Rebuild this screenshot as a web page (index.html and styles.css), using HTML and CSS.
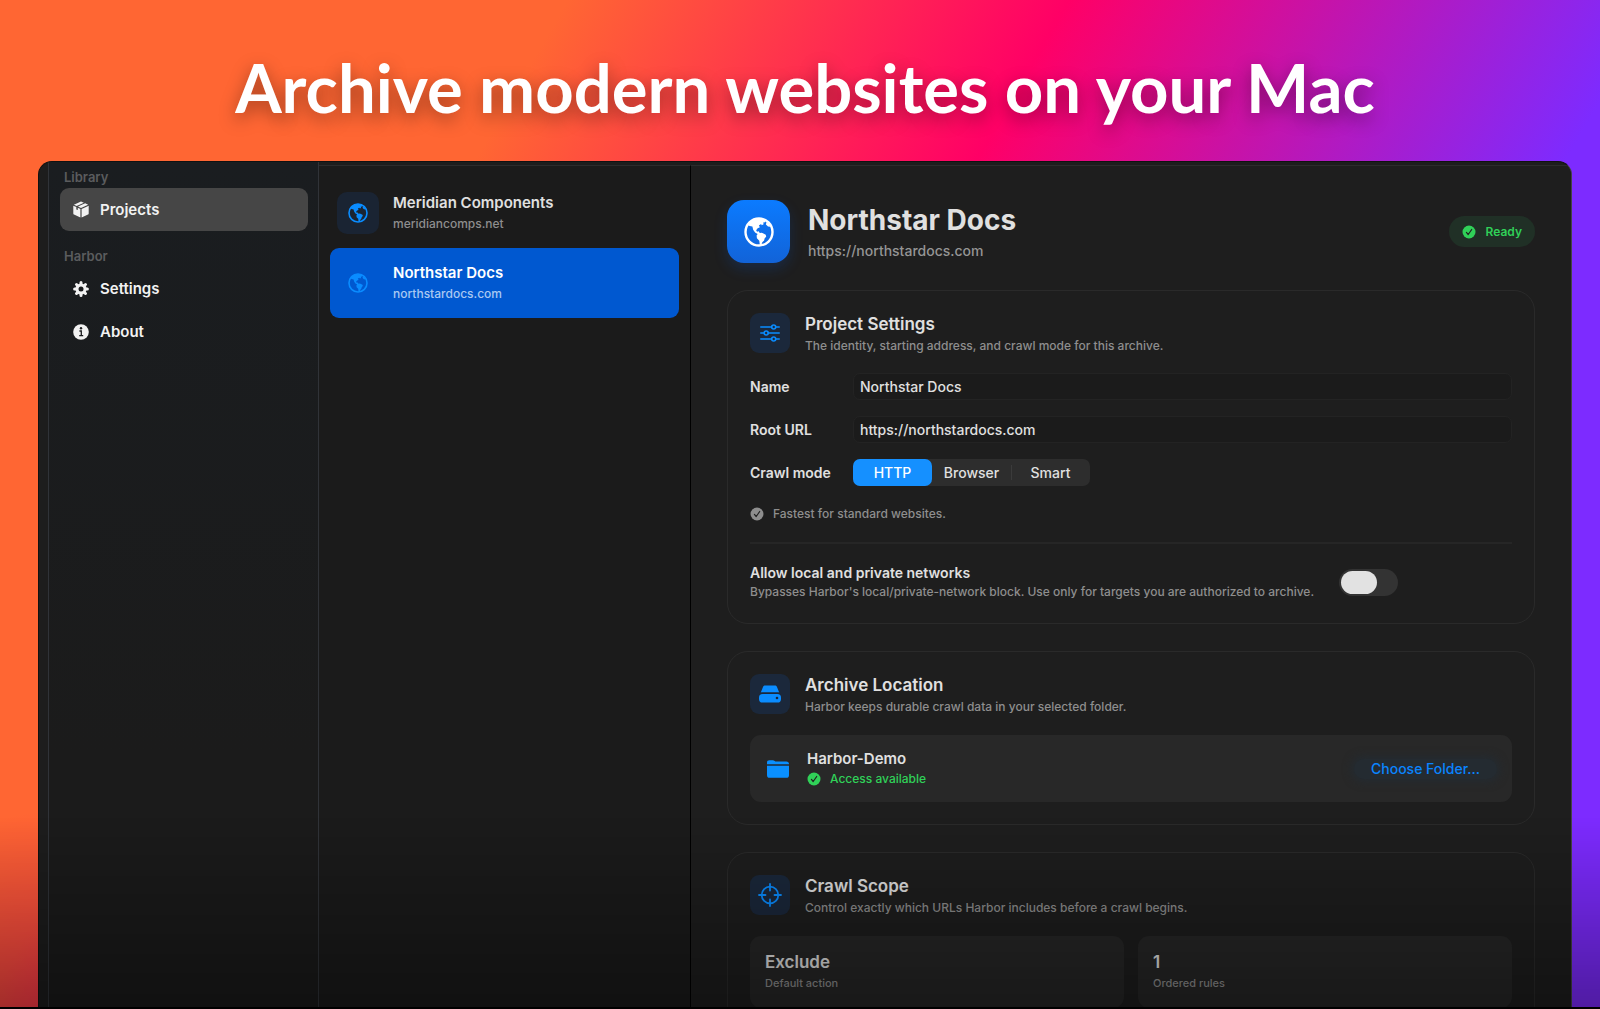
FILE: index.html
```html
<!DOCTYPE html>
<html lang="en">
<head>
  <meta charset="UTF-8" />
  <meta name="viewport" content="width=device-width, initial-scale=1.0"/>
  <title>Harbor</title>
  <link rel="stylesheet" href="styles.css">
</head>
<body>
  <!-- shared icons -->
  <svg class="sprite" aria-hidden="true">
    <symbol id="globe" viewBox="0 0 20 20">
      <circle cx="10" cy="10" r="9" fill="none" stroke="currentColor" stroke-width="1.600"/>
      <path fill="currentColor" d="M2.200 5.200C3.800 2.400 6.600 1 10 1c1.700 0 3.200.4 4.600 1.200l-.5 1.300-1.300.2.300 1.200-1.300.6-.4-.8-1.500.9.700 1.300-1.500.6-1 1.300.6 1 1.100-.3.700 1.200 1.400-.2 2.600 1.300.300 1.300-1 1-.4 1.500-1.200 1.300-.7 1.800-1-.3-.3-2.600-1.600-1.600-.2-1.800.7-1-1.700-1-1.300-1.900-.5-2.100-1.800-.4z"/>
      <path fill="currentColor" d="M15 3.300l1.700 1.400.9 1.800-1.600-.2-1.400-1.300z"/>
    </symbol>
    <symbol id="check" viewBox="0 0 14 14">
      <circle cx="7" cy="7" r="6.500" fill="currentColor"/>
      <path d="M4.400 7.400l1.800 2.100 3.500-5" fill="none" stroke="#222" stroke-width="1.200" stroke-linecap="round" stroke-linejoin="round"/>
    </symbol>
  </svg>

  <h1 class="headline">Archive modern websites on your Mac</h1>

  <div class="window">
    <nav class="sidebar">
      <h2>Library</h2>
      <a href="#projects" class="nav-item active">
        <svg width="16" height="17" viewBox="0 0 16 17" fill="currentColor"><path d="M8 .4l2.900 1.300-7.200 3.200L.9 3.700zM12.200 2.300L15.100 3.700 8 7 5 5.600zM.3 4.800L3.300 6.100v2.300l1.500.7V6.800l2.600 1.200v8.500L1 13.500a1.200 1.200 0 0 1-.7-1.100zM15.700 4.800v7.600c0 .5-.3.900-.7 1.100l-6.400 3V8z"/></svg>
        Projects
      </a>
      <h2>Harbor</h2>
      <a href="#settings" class="nav-item">
        <svg width="16" height="16" viewBox="0 0 16 16"><g stroke="currentColor" stroke-width="3" stroke-linecap="round"><path d="M8 1.600v12.800M1.600 8h12.800M3.500 3.500l9 9M12.500 3.500l-9 9"/></g><circle cx="8" cy="8" r="5.600" fill="currentColor"/><circle cx="8" cy="8" r="2.500" fill="#1b1c1e"/></svg>
        Settings
      </a>
      <a href="#about" class="nav-item">
        <svg width="16" height="16" viewBox="0 0 16 16"><circle cx="8" cy="8" r="7.800" fill="currentColor"/><circle cx="8" cy="4.300" r="1.200" fill="#1b1c1e"/><path d="M6.400 7h1.900v4.600M6.200 11.700h4" fill="none" stroke="#1b1c1e" stroke-width="1.300"/></svg>
        About
      </a>
    </nav>

    <section class="projects">
      <a href="#meridian" class="project">
        <span class="project-icon"><svg width="20" height="20"><use href="#globe"/></svg></span>
        <span class="project-text"><strong>Meridian Components</strong><small>meridiancomps.net</small></span>
      </a>
      <a href="#northstar" class="project selected">
        <span class="project-icon"><svg width="20" height="20"><use href="#globe"/></svg></span>
        <span class="project-text"><strong>Northstar Docs</strong><small>northstardocs.com</small></span>
      </a>
    </section>

    <main class="detail">
      <header class="detail-header">
        <span class="app-icon"><svg width="30" height="30"><use href="#globe"/></svg></span>
        <div class="detail-title">
          <h2>Northstar Docs</h2>
          <p>https://northstardocs.com</p>
        </div>
        <span class="badge"><svg width="14" height="14"><use href="#check"/></svg>Ready</span>
      </header>

      <section class="card">
        <div class="card-header">
          <span class="card-icon">
            <svg width="20" height="18" viewBox="0 0 20 18" fill="none" stroke="currentColor" stroke-width="1.600" stroke-linecap="round"><path d="M.8 3h10.800M15.800 3h3.400M.8 9H4M8.300 9h10.900M.8 15h10.800M15.800 15h3.400"/><circle cx="13.700" cy="3" r="2"/><circle cx="6.200" cy="9" r="2"/><circle cx="13.700" cy="15" r="2"/></svg>
          </span>
          <div>
            <h3>Project Settings</h3>
            <p>The identity, starting address, and crawl mode for this archive.</p>
          </div>
        </div>
        <form class="settings-form">
          <div class="field">
            <label for="name">Name</label>
            <input type="text" id="name" value="Northstar Docs" />
          </div>
          <div class="field">
            <label for="rootUrl">Root URL</label>
            <input type="text" id="rootUrl" value="https://northstardocs.com" />
          </div>
          <div class="field" role="radiogroup" aria-labelledby="modeLabel">
            <span class="field-label" id="modeLabel">Crawl mode</span>
            <div class="segments">
              <label><input type="radio" name="mode" checked /><span>HTTP</span></label>
              <label><input type="radio" name="mode" /><span>Browser</span></label>
              <label><input type="radio" name="mode" /><span>Smart</span></label>
            </div>
          </div>
          <p class="hint"><svg width="14" height="14"><use href="#check"/></svg>Fastest for standard websites.</p>
          <hr>
          <div class="toggle-row">
            <label for="allowLocal">
              <strong>Allow local and private networks</strong>
              <small>Bypasses Harbor's local/private-network block. Use only for targets you are authorized to archive.</small>
            </label>
            <input type="checkbox" id="allowLocal" class="toggle" />
          </div>
        </form>
      </section>

      <section class="card">
        <div class="card-header">
          <span class="card-icon">
            <svg width="22" height="18" viewBox="0 0 22 18"><path fill="currentColor" d="M6.200.5h9.600c1 0 1.700.5 2.100 1.300l2.300 5.700c-.5-.2-1-.3-1.600-.3H3.400c-.6 0-1.100.1-1.600.3l2.300-5.700C4.500 1 5.200.5 6.200.5z"/><rect y="8.900" width="22" height="8.600" rx="3.600" fill="currentColor"/><circle cx="18" cy="13" r="1.300" fill="#16263c"/></svg>
          </span>
          <div>
            <h3>Archive Location</h3>
            <p>Harbor keeps durable crawl data in your selected folder.</p>
          </div>
        </div>
        <div class="folder">
          <svg class="folder-icon" width="22" height="18" viewBox="0 0 22 18"><path fill="currentColor" d="M0 4.300V2.600C0 1 .9.200 2.500.200h3.200c.9 0 1.400.2 2 .7l.7.600h10.900c1.700 0 2.700.9 2.700 2.500v.3zM0 5.700h22v9.500c0 1.700-.9 2.600-2.600 2.600H2.600C.9 17.800 0 16.900 0 15.200z"/><path stroke="#17436c" stroke-width="1.200" d="M2 5h18"/></svg>
          <div class="folder-text">
            <strong>Harbor-Demo</strong>
            <span><svg width="14" height="14"><use href="#check"/></svg>Access available</span>
          </div>
          <button type="button">Choose Folder…</button>
        </div>
      </section>

      <section class="card">
        <div class="card-header">
          <span class="card-icon">
            <svg width="24" height="24" viewBox="0 0 24 24" fill="none" stroke="currentColor" stroke-width="1.800" stroke-linecap="round"><circle cx="12" cy="12" r="8.300"/><path d="M12 1v6.500M12 16.500V23M1 12h6.500M16.500 12H23"/></svg>
          </span>
          <div>
            <h3>Crawl Scope</h3>
            <p>Control exactly which URLs Harbor includes before a crawl begins.</p>
          </div>
        </div>
        <div class="stats">
          <div class="stat"><strong>Exclude</strong><small>Default action</small></div>
          <div class="stat"><strong>1</strong><small>Ordered rules</small></div>
        </div>
      </section>
    </main>
  </div>
</body>
</html>
```
FILE: styles.css
```css
* { box-sizing: border-box; }
body {
  margin: 0; height: 100vh; overflow: hidden;
  display: flex; flex-direction: column;
  font-family: Inter, "Liberation Sans", sans-serif;
  font-size: 14px; line-height: 20px; color: #e0e0e0;
  background:
    radial-gradient(circle at 60px 100%, rgba(255,0,102,0.4), rgba(255,0,102,0) 200px),
    linear-gradient(120deg, #ff6633 26%, #ff0066 49%, #7d2bff 76%);
}
/* fade towards the bottom edge */
body::after {
  content: ""; position: fixed; left: 0; right: 0; bottom: 0; height: 190px;
  border-bottom: 2px solid #000; pointer-events: none;
  background: linear-gradient(rgba(0,0,0,0), rgba(0,0,0,0.36));
}
h1, h2, h3, p { margin: 0; }
a { color: inherit; text-decoration: none; }
svg { display: block; flex: none; }
strong { font-weight: 600; }
small { font-size: 12px; font-weight: 500; color: #8e8e8e; }
input, button { font: inherit; color: inherit; }
.sprite { position: absolute; width: 0; height: 0; }

.headline {
  padding: 45px 28px 32px 38px; text-align: center;
  font: 700 67px/84px Lato, sans-serif; color: #fff;
  text-shadow: 0 6px 18px rgba(0,0,0,0.4);
}
.window {
  flex: 1; min-height: 0; display: flex;
  margin: 0 28px 0 38px; overflow: hidden;
  background: #1d1d1d; border: 1px solid #111;
  border-right-color: #444; border-bottom: 0;
  border-radius: 14px 14px 0 0;
}

.sidebar {
  width: 271px; flex: none; margin-left: 9px; padding: 6px 10px 6px 11px;
  background: linear-gradient(#1a1d20, #1b1b1b 70%);
  border: solid #303338; border-width: 0 1px;
  color: #f2f2f2;
}
.sidebar h2 {
  padding: 0 4px 2px; font-size: 13px; line-height: 18px; font-weight: 600; color: #5b5c5e;
}
.nav-item {
  display: flex; align-items: center; gap: 11px;
  height: 43px; padding: 0 13px; border-radius: 9px;
  font-size: 15px; font-weight: 600;
}
.nav-item.active { background: #464646; }
.nav-item + h2 { margin-top: 16px; }

.projects {
  width: 372px; flex: none; padding: 12px 11px;
  background: #1b1b1b; border-top: 1px solid #2c2c2c; border-right: 1px solid #000;
  margin-top: 3px;
}
.project {
  display: flex; align-items: center; gap: 14px;
  height: 70px; padding: 0 7px; border-radius: 9px;
}
.project-icon {
  width: 42px; height: 42px; border-radius: 10px;
  display: grid; place-items: center;
  background: #1a2433; color: #0a8cff;
}
.project-text { display: grid; }
.project-text strong { font-size: 15px; line-height: 22px; }
.project.selected { background: #0058d0; color: #fff; }
.project.selected .project-icon { background: none; }
.project.selected small { color: #a9c8f2; }

.detail {
  flex: 1; min-width: 0; overflow: hidden; margin-top: 3px; padding: 34px 36px;
  background: #1e1e1e; border-top: 1px solid #2c2c2c;
  display: flex; flex-direction: column;
}
.detail-header { display: flex; align-items: center; gap: 18px; margin-bottom: 27px; }
.app-icon {
  width: 63px; height: 63px; border-radius: 17px;
  display: grid; place-items: center; color: #fff;
  background: linear-gradient(#0b7bff, #1263d8);
  box-shadow: 0 6px 14px rgba(10,90,220,0.2);
}
.detail-title { flex: 1; padding-top: 1px; }
.detail-title h2 { font-size: 28px; line-height: 38px; font-weight: 700; }
.detail-title p { line-height: 24px; font-weight: 500; color: #959595; }
.badge {
  display: flex; align-items: center; gap: 10px;
  height: 31px; padding: 0 13px; border-radius: 16px;
  font-size: 12px; font-weight: 600; color: #30d158; background: #203026;
}

.card {
  flex: none; margin-bottom: 27px; padding: 22px 22px 22px 22px;
  border: 1px solid #2a2a2a; border-radius: 21px;
}
.card-header { display: flex; align-items: flex-start; gap: 15px; }
.card-icon {
  width: 40px; height: 40px; border-radius: 9px;
  display: grid; place-items: center;
  background: #1b283b; color: #0a8cff;
}
.card h3 { font-size: 17px; line-height: 22px; font-weight: 600; }
.card-header p { font-size: 12px; line-height: 22px; font-weight: 500; color: #8e8e8e; }

.settings-form { padding-top: 16px; }
.field { display: flex; align-items: center; height: 27px; margin-bottom: 16px; font-weight: 500; }
.field > label, .field-label { width: 103px; flex: none; font-weight: 600; }
.field > input {
  flex: 1; min-width: 0; height: 27px; padding: 0 6px;
  background: #1b1b1b; border: 1px solid #232323; border-radius: 7px; outline: 0;
}
.segments { display: flex; background: #2d2d2d; border-radius: 7px; }
.segments label { position: relative; width: 79px; }
.segments label + label + label::before {
  content: ""; position: absolute; left: 0; top: 6px; height: 15px; border-left: 1px solid #3b3b3b;
}
.segments input { position: absolute; opacity: 0; margin: 0; }
.segments span { display: block; line-height: 27px; text-align: center; border-radius: 7px; }
.segments input:checked + span { background: #1590ff; color: #fff; }
.hint {
  display: flex; align-items: center; gap: 9px; padding-top: 2px;
  font-size: 12px; font-weight: 500; color: #8e8e8e;
}
hr { margin: 18px 0 19px; border: 0; border-top: 2px solid #262626; }
.toggle-row { display: flex; align-items: center; gap: 25px; }
.toggle-row strong, .toggle-row small { display: block; }
.toggle-row small { line-height: 18px; }
.toggle {
  appearance: none; width: 59px; height: 27px; margin: 0; flex: none;
  padding: 2px; border-radius: 14px; background: #333;
}
.toggle::before {
  content: ""; display: block; width: 36px; height: 23px; border-radius: 12px; background: #e2e2e2;
}
.toggle:checked { background: #30d158; }
.toggle:checked::before { margin-left: auto; }

.folder {
  display: flex; align-items: center; gap: 18px;
  height: 67px; margin-top: 17px; padding: 0 15px 0 17px;
  background: #282828; border-radius: 11px;
}
.folder-icon { color: #0a90ff; }
.folder-text { flex: 1; }
.folder-text strong { display: block; font-size: 15px; }
.folder-text span {
  display: flex; align-items: center; gap: 9px;
  font-size: 12px; font-weight: 500; color: #30d158;
}
.folder button {
  height: 20px; padding: 0 17px; border: 0; border-radius: 10px;
  line-height: 20px; font-weight: 500; color: #0a84ff;
  background: #242b31; box-shadow: 0 0 8px 3px #242b31;
}

.stats { display: grid; grid-template-columns: 1fr 1fr; gap: 14px; margin-top: 17px; }
.stat { padding: 15px; background: #272727; border-radius: 11px; }
.stat strong, .stat small { display: block; }
.stat strong { font-size: 17px; line-height: 22px; }
.stat small { font-size: 11px; }
```
